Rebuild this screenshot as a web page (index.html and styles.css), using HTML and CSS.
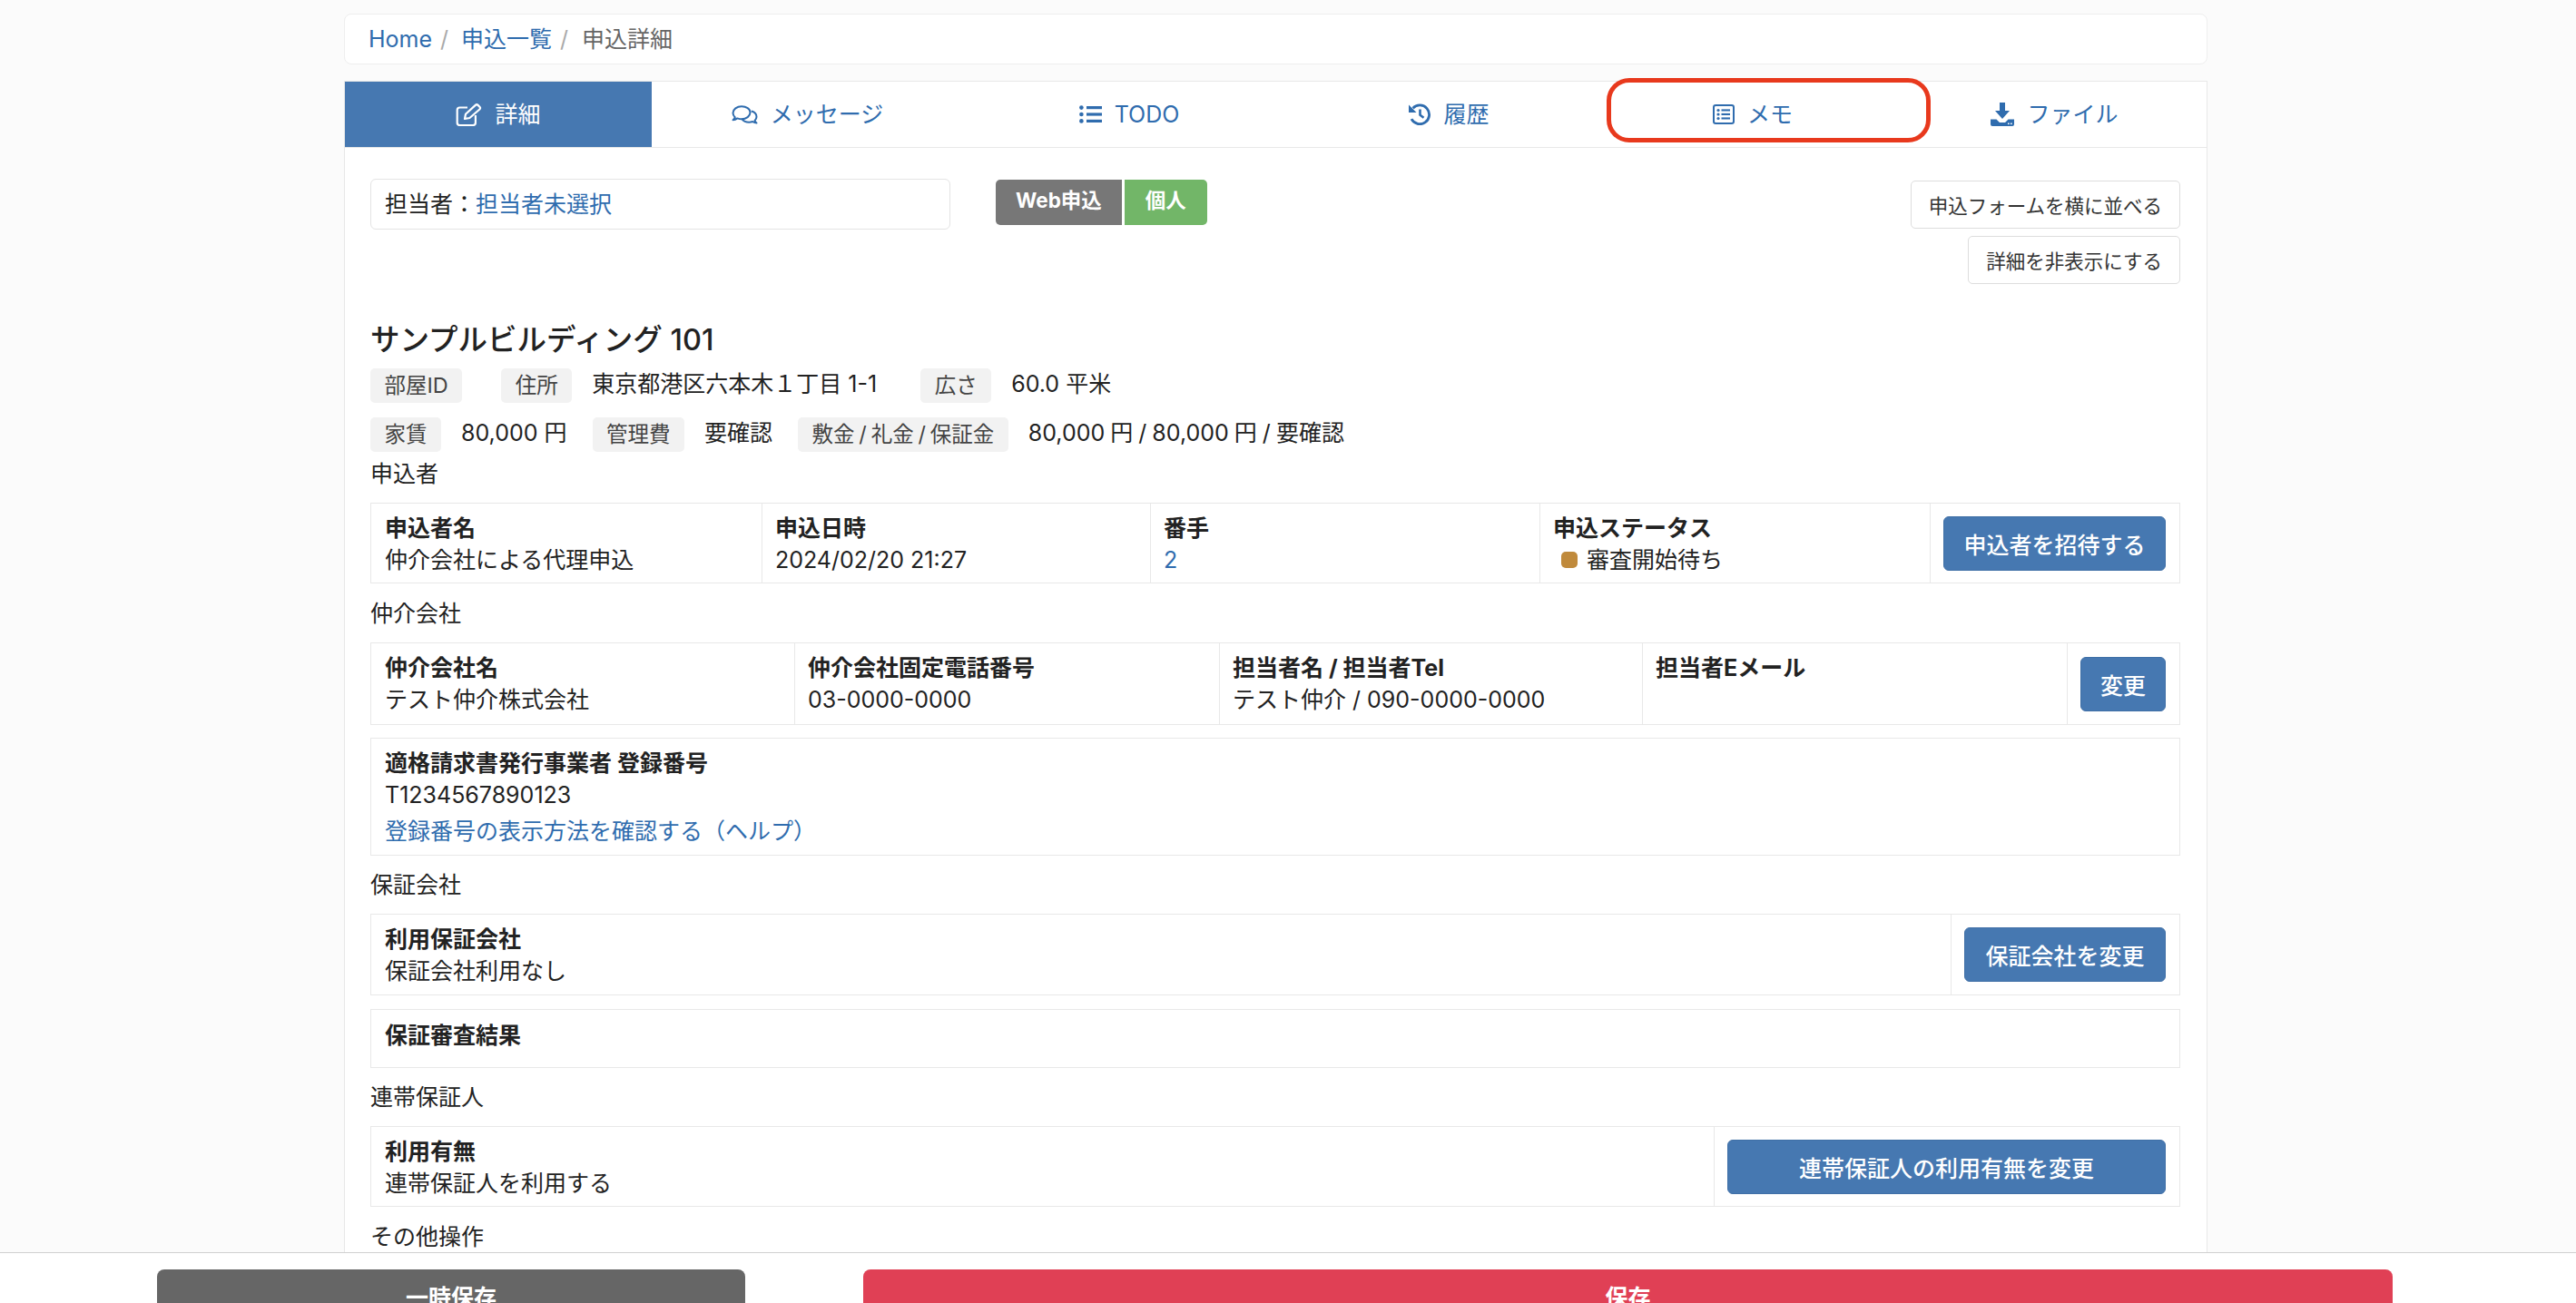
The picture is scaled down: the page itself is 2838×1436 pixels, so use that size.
FILE: index.html
```html
<!DOCTYPE html>
<html lang="ja">
<head>
    <meta charset="UTF-8">
    <meta name="viewport" content="width=device-width, initial-scale=1.0">
    <title>申込詳細</title>
    <link rel="stylesheet" href="styles.css">
</head>
<body>
    <main class="page">
        <div class="container">
            <nav class="breadcrumb">
                <a href="#">Home</a><span class="sep">/</span>
                <a href="#">申込一覧</a><span class="sep">/</span>
                <span class="current">申込詳細</span>
            </nav>

            <div class="panel">
                <div class="tabs">
                    <a href="#" class="tab active">
                        <svg class="icon" width="29" height="25" viewBox="0 0 29 25" fill="none" stroke="currentColor" stroke-width="2.2"><path d="M13 4.5H4.5A2.8 2.8 0 0 0 1.7 7.3v13.9A2.8 2.8 0 0 0 4.5 24h14.6a2.8 2.8 0 0 0 2.8-2.8V13"/><path d="M10 17l1-5.2L21.8 1.9a2 2 0 0 1 2.8 0l1.8 1.8a2 2 0 0 1 0 2.8L15.4 16z" stroke-linejoin="round"/></svg>
                        詳細
                    </a>
                    <a href="#" class="tab">
                        <svg class="icon" width="29" height="21" viewBox="0 0 29 21" fill="none" stroke="currentColor" stroke-width="2"><path d="M11 1.2C5.8 1.2 1.5 4.5 1.5 8.5c0 1.8.9 3.4 2.3 4.7-.5 1.3-1.5 2.4-2.3 3 1.8-.1 3.6-.9 4.9-1.8 1.4.5 3 .9 4.6.9 5.2 0 9.5-3.3 9.5-7.3S16.2 1.2 11 1.2z" stroke-linejoin="round"/><path d="M21.8 6.5c3.3.9 5.7 3.3 5.7 6.2 0 1.6-.8 3-2 4.2.4 1.1 1.3 2.1 2 2.7-1.6-.1-3.1-.8-4.3-1.6-1.2.4-2.6.7-4 .7-3.3 0-6.2-1.4-7.8-3.6" stroke-linejoin="round"/></svg>
                        メッセージ
                    </a>
                    <a href="#" class="tab">
                        <svg class="icon" width="25" height="20" viewBox="0 0 25 20" fill="currentColor"><circle cx="2.4" cy="2.6" r="2.3"/><circle cx="2.4" cy="10" r="2.3"/><circle cx="2.4" cy="17.4" r="2.3"/><rect x="8" y="1" width="17" height="3.2"/><rect x="8" y="8.4" width="17" height="3.2"/><rect x="8" y="15.8" width="17" height="3.2"/></svg>
                        TODO
                    </a>
                    <a href="#" class="tab">
                        <svg class="icon" width="24" height="24" viewBox="0 0 24 24" fill="none" stroke="currentColor" stroke-width="2.8"><path d="M4.6 5.2A10.4 10.4 0 1 1 3 17.2"/><path d="M0 1.5l8.5 8.5H0z" fill="currentColor" stroke="none"/><path d="M12.5 6.5v6.2l4 3" stroke-width="2.6"/></svg>
                        履歴
                    </a>
                    <a href="#" class="tab">
                        <svg class="icon" width="24" height="22" viewBox="0 0 24 22" fill="currentColor"><rect x="1" y="1" width="22" height="20" rx="2.2" fill="none" stroke="currentColor" stroke-width="2"/><circle cx="6" cy="6.5" r="1.6"/><circle cx="6" cy="11" r="1.6"/><circle cx="6" cy="15.5" r="1.6"/><rect x="9.5" y="5.4" width="9.5" height="2.1"/><rect x="9.5" y="9.9" width="9.5" height="2.1"/><rect x="9.5" y="14.4" width="9.5" height="2.1"/></svg>
                        メモ
                    </a>
                    <a href="#" class="tab">
                        <svg class="icon" width="26" height="26" viewBox="0 0 26 26" fill="currentColor"><path d="M10 0h6v9h5l-8 9-8-9h5z"/><path d="M0 18.5h6.5l3.5 3.5h6l3.5-3.5H26V24a2 2 0 0 1-2 2H2a2 2 0 0 1-2-2z"/><rect x="19" y="22.5" width="1.6" height="1.6" fill="#fff"/><rect x="22" y="22.5" width="1.6" height="1.6" fill="#fff"/></svg>
                        ファイル
                    </a>
                </div>

                <div class="panel-body">
                    <div class="toolbar">
                        <div class="assignee">担当者：<a href="#">担当者未選択</a></div>
                        <div class="badges">
                            <span class="badge badge-gray">Web申込</span>
                            <span class="badge badge-green">個人</span>
                        </div>
                        <div class="toolbar-actions">
                            <button class="btn-small">申込フォームを横に並べる</button>
                            <button class="btn-small">詳細を非表示にする</button>
                        </div>
                    </div>

                    <h1 class="room-title">サンプルビルディング 101</h1>
                    <div class="meta-row">
                        <span class="chip chip-empty">部屋ID</span>
                        <span class="chip">住所</span>
                        <span class="meta-value meta-value-wide">東京都港区六本木１丁目 1-1</span>
                        <span class="chip">広さ</span>
                        <span class="meta-value">60.0 平米</span>
                    </div>
                    <div class="meta-row meta-row-second">
                        <span class="chip">家賃</span>
                        <span class="meta-value">80,000 円</span>
                        <span class="chip">管理費</span>
                        <span class="meta-value">要確認</span>
                        <span class="chip chip-tight">敷金 / 礼金 / 保証金</span>
                        <span class="meta-value meta-value-tight">80,000 円 / 80,000 円 / 要確認</span>
                    </div>

                    <h2 class="section-title">申込者</h2>
                    <div class="info-row applicant-row">
                        <div class="cell"><div class="cell-label">申込者名</div><div>仲介会社による代理申込</div></div>
                        <div class="cell"><div class="cell-label">申込日時</div><div>2024/02/20 21:27</div></div>
                        <div class="cell"><div class="cell-label">番手</div><div><a href="#">2</a></div></div>
                        <div class="cell"><div class="cell-label">申込ステータス</div><div class="status"><span class="status-dot"></span>審査開始待ち</div></div>
                        <div class="cell cell-action"><button class="btn-primary">申込者を招待する</button></div>
                    </div>

                    <h2 class="section-title">仲介会社</h2>
                    <div class="info-row broker-row">
                        <div class="cell"><div class="cell-label">仲介会社名</div><div>テスト仲介株式会社</div></div>
                        <div class="cell"><div class="cell-label">仲介会社固定電話番号</div><div>03-0000-0000</div></div>
                        <div class="cell"><div class="cell-label">担当者名 / 担当者Tel</div><div>テスト仲介 / 090-0000-0000</div></div>
                        <div class="cell"><div class="cell-label">担当者Eメール</div></div>
                        <div class="cell cell-action"><button class="btn-primary">変更</button></div>
                    </div>
                    <div class="invoice-box">
                        <div class="cell-label">適格請求書発行事業者 登録番号</div>
                        <div>T1234567890123</div>
                        <a href="#" class="invoice-link">登録番号の表示方法を確認する（ヘルプ）</a>
                    </div>

                    <h2 class="section-title">保証会社</h2>
                    <div class="info-row guarantor-row">
                        <div class="cell"><div class="cell-label">利用保証会社</div><div>保証会社利用なし</div></div>
                        <div class="cell cell-action"><button class="btn-primary">保証会社を変更</button></div>
                    </div>
                    <div class="result-box"><div class="cell-label">保証審査結果</div></div>

                    <h2 class="section-title">連帯保証人</h2>
                    <div class="info-row joint-row">
                        <div class="cell"><div class="cell-label">利用有無</div><div>連帯保証人を利用する</div></div>
                        <div class="cell cell-action"><button class="btn-primary">連帯保証人の利用有無を変更</button></div>
                    </div>

                    <h2 class="section-title">その他操作</h2>
                </div>
            </div>
            <div class="annotation"></div>
        </div>
    </main>

    <footer class="footer">
        <button class="btn-footer btn-draft">一時保存</button>
        <button class="btn-footer btn-save">保存</button>
    </footer>
</body>
</html>
```

FILE: styles.css
```css
:root {
    --primary-color: #4678b1;
    --link-color: #2f6cae;
    --line-color: #e8e8e8;
    --text-color: #222;
}

* {
    box-sizing: border-box;
}

html, body {
    height: 100%;
}

body {
    margin: 0;
    display: flex;
    flex-direction: column;
    height: 100vh;
    overflow: hidden;
    background-color: #fbfbfb;
    color: var(--text-color);
    font-family: Inter, "Noto Sans CJK JP", sans-serif;
    font-size: 25px;
    line-height: 34.5px;
}

a {
    color: var(--link-color);
    text-decoration: none;
}

button {
    font-family: inherit;
    cursor: pointer;
}

.page {
    flex: 1;
    min-height: 0;
    overflow: hidden;
    padding: 15px 0 0 379px;
}

.container {
    position: relative;
    width: 2053px;
}

/* breadcrumb */
.breadcrumb {
    display: flex;
    align-items: center;
    height: 56px;
    margin-bottom: 18px;
    padding: 0 26px;
    background-color: #fff;
    border: 1px solid #eee;
    border-radius: 8px;
}

.breadcrumb .sep {
    margin: 0 14px 0 9px;
    color: #aaa;
}

.breadcrumb .current {
    margin-left: 1px;
    color: #666;
}

/* tabs */
.panel {
    min-height: 1400px;
    background-color: #fff;
    border: 1px solid var(--line-color);
    border-bottom: none;
}

.tabs {
    display: grid;
    grid-template-columns: 338px 343px 366px 339px 330px 1fr;
    height: 73px;
    border-bottom: 1px solid var(--line-color);
}

.tab {
    display: flex;
    align-items: center;
    justify-content: center;
    gap: 14px;
    color: var(--link-color);
}

.tab.active {
    background-color: var(--primary-color);
    color: #fff;
}

.icon {
    flex-shrink: 0;
}

/* red marker around the memo tab */
.annotation {
    position: absolute;
    top: 71px;
    left: 1391px;
    width: 357px;
    height: 71px;
    border: 5px solid #e8391d;
    border-radius: 25px;
    pointer-events: none;
}

.panel-body {
    padding: 34px 29px 0 28px;
}

.toolbar {
    position: relative;
    display: flex;
    align-items: flex-start;
    height: 116px;
}

.assignee {
    width: 639px;
    height: 56px;
    padding: 10px 15px;
    border: 1px solid #e4e4e4;
    border-radius: 6px;
}

.badges {
    display: flex;
    gap: 3px;
    margin: 1px 0 0 50px;
}

.badge {
    height: 50px;
    padding: 0 22px;
    border-radius: 5px;
    color: #fff;
    font-size: 22.5px;
    font-weight: 700;
    line-height: 46px;
}

.badge-gray {
    border-radius: 5px 0 0 5px;
    background-color: #777;
}

.badge-green {
    padding: 0 23px;
    border-radius: 0 5px 5px 0;
    background-color: #72b668;
}

.toolbar-actions {
    display: flex;
    flex-direction: column;
    align-items: flex-end;
    gap: 8px;
    margin: 2px 0 0 auto;
}

.btn-small {
    height: 53px;
    padding: 0 19px;
    background-color: #fff;
    border: 1px solid #ddd;
    border-radius: 5px;
    color: #333;
    font-size: 21.5px;
}

.room-title {
    margin: 39px 0 8px;
    font-size: 32.5px;
    font-weight: 500;
    line-height: 46px;
}

.meta-row {
    display: flex;
    align-items: center;
    height: 38px;
}

.meta-row-second {
    margin-top: 16px;
}

.chip {
    margin-right: 22px;
    padding: 0 15.5px;
    height: 38px;
    background-color: #f2f2f2;
    border-radius: 5px;
    color: #444;
    font-size: 23.5px;
    line-height: 38px;
}

.chip-empty {
    margin-right: 43px;
}

.chip-tight {
    word-spacing: -1.8px;
}

.meta-value {
    margin: -4px 28px 0 0;
}

.meta-value-wide {
    margin-right: 48px;
}

.meta-value-tight {
    word-spacing: -1px;
}

.section-title {
    margin: 15px 0 14px;
    padding-top: 1px;
    font-size: 25px;
    font-weight: 400;
    line-height: 35px;
}

.meta-row-second + .section-title {
    margin-top: 6px;
}

.invoice-box + .section-title,
.result-box + .section-title {
    margin-top: 14px;
}

/* info tables */
.info-row {
    display: grid;
    height: 90px;
    background-color: #fff;
    border: 1px solid var(--line-color);
}

.applicant-row {
    height: 89px;
    grid-template-columns: 430px 428px 429px 430px 1fr;
}

.broker-row {
    height: 91px;
    grid-template-columns: 466px 468px 466px 468px 1fr;
}

.guarantor-row {
    grid-template-columns: 1740px 1fr;
}

.joint-row {
    height: 89px;
    grid-template-columns: 1479px 1fr;
}

.cell {
    padding: 10px 14px 0;
    border-left: 1px solid var(--line-color);
}

.cell:first-child {
    padding-left: 15px;
    border-left: none;
}

.cell-label {
    font-weight: 700;
}

.cell-action {
    display: flex;
    align-items: center;
    padding: 0 15px 0 14px;
}

.btn-primary {
    width: 100%;
    height: 60px;
    padding: 0;
    background-color: var(--primary-color);
    border: 1px solid #3f6fa6;
    border-radius: 6px;
    color: #fff;
    font-size: 25px;
    font-weight: 500;
}

.status {
    display: flex;
    align-items: center;
    padding-left: 9px;
}

.status-dot {
    width: 18px;
    height: 18px;
    margin-right: 10px;
    background-color: #c08a3c;
    border-radius: 5px;
}

.invoice-box {
    height: 130px;
    margin-top: 14px;
    padding: 10px 15px 0;
    border: 1px solid var(--line-color);
}

.invoice-link {
    display: block;
    margin-top: 6px;
}

.result-box {
    height: 65px;
    margin-top: 15px;
    padding: 11px 15px 0;
    border: 1px solid var(--line-color);
}

/* footer */
.footer {
    flex-shrink: 0;
    display: flex;
    gap: 130px;
    height: 56px;
    padding: 18px 0 0 173px;
    overflow: hidden;
    background-color: #fff;
    border-top: 1px solid #d0d0d0;
}

.btn-footer {
    height: 72px;
    padding: 0 0 14px;
    border: none;
    border-radius: 8px 8px 0 0;
    color: #fff;
    font-size: 25px;
    font-weight: 700;
}

.btn-draft {
    width: 648px;
    background-color: #666;
}

.btn-save {
    width: 1685px;
    background-color: #e04055;
}
```
